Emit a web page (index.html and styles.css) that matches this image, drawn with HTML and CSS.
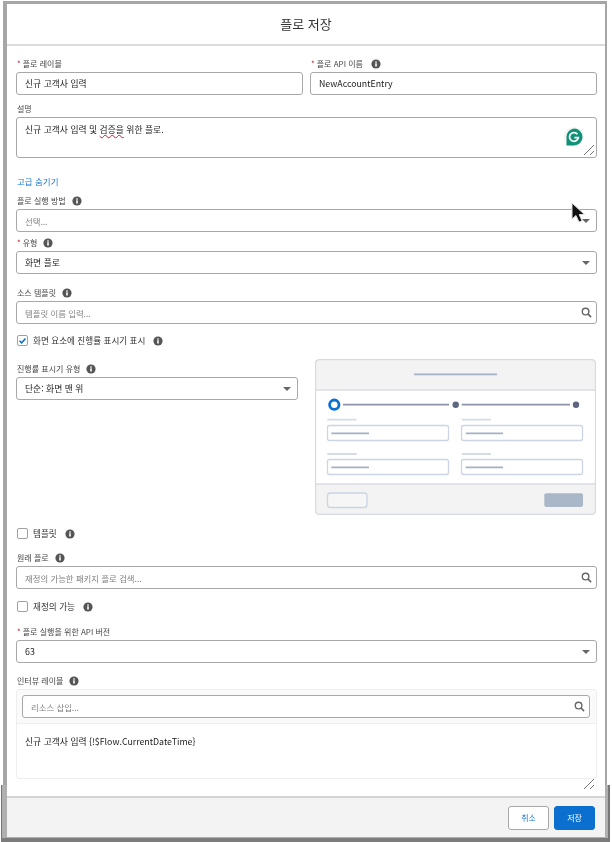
FILE: index.html
```html
<!DOCTYPE html>
<html lang="ko">
<head>
    <meta charset="UTF-8">
    <title>플로 저장</title>
    <link rel="stylesheet" href="styles.css">
</head>
<body>
    <svg class="defs" width="0" height="0">
        <symbol id="info" viewBox="0 0 10 10">
            <circle cx="5" cy="5" r="4.6" fill="#555"/>
            <rect x="4.2" y="4.3" width="1.6" height="3.2" fill="#fff"/>
            <rect x="4.2" y="2.4" width="1.6" height="1.3" fill="#fff"/>
        </symbol>
        <symbol id="search" viewBox="0 0 12 12">
            <circle cx="5" cy="5" r="3.6" fill="none" stroke="#666" stroke-width="1.5"/>
            <path d="M7.8 7.8 11 11" stroke="#666" stroke-width="1.7"/>
        </symbol>
        <symbol id="grip" viewBox="0 0 12 12">
            <path d="M1 11 11 1M7 11 11 7" stroke="#777" stroke-width="1"/>
        </symbol>
    </svg>

    <div class="frame">
        <div class="modal">
            <div class="modal-header">플로 저장</div>

            <div class="form">
                <div class="two-col row-first">
                    <div>
                        <div class="label"><span class="req">*</span>플로 레이블</div>
                        <div class="control">신규 고객사 입력</div>
                    </div>
                    <div>
                        <div class="label"><span class="req">*</span>플로 API 이름<svg class="info info-api"><use href="#info"/></svg></div>
                        <div class="control">NewAccountEntry</div>
                    </div>
                </div>

                <div class="field gap-8">
                    <div class="label">설명</div>
                    <div class="control textarea">
                        <span>신규 고객사 입력 및 <span class="misspelled">검증을</span> 위한 플로.</span>
                        <span class="grammarly">
                            <svg width="18" height="18" viewBox="0 0 18 18">
                                <path d="M9 .5A8.500 8.500 0 1 1 9 17.500H1.500V9A8.500 8.500 0 0 1 9 .5Z" fill="#0f9277"/>
                                <path d="M12.400 6.200A4.400 4.400 0 1 0 13.300 9.700H9.400" fill="none" stroke="#fff" stroke-width="1.700"/>
                            </svg>
                        </span>
                        <svg class="grip"><use href="#grip"/></svg>
                    </div>
                </div>

                <div class="link">고급 숨기기</div>

                <div class="field gap-8">
                    <div class="label">플로 실행 방법<svg class="info"><use href="#info"/></svg></div>
                    <div class="control select placeholder">선택...</div>
                </div>

                <div class="field gap-5">
                    <div class="label"><span class="req">*</span>유형<svg class="info"><use href="#info"/></svg></div>
                    <div class="control select">화면 플로</div>
                </div>

                <div class="field gap-13">
                    <div class="label">소스 템플릿<svg class="info"><use href="#info"/></svg></div>
                    <div class="control placeholder with-search">템플릿 이름 입력...<svg class="search"><use href="#search"/></svg></div>
                </div>

                <div class="check-row gap-10">
                    <span class="checkbox">
                        <svg width="9" height="9" viewBox="0 0 9 9"><path d="M1.5 4.8 3.6 6.8 7.5 2.4" fill="none" stroke="#0b6fd0" stroke-width="1.5"/></svg>
                    </span>
                    화면 요소에 진행률 표시기 표시<svg class="info info-far"><use href="#info"/></svg>
                </div>

                <div class="progress-row">
                    <div class="progress-left">
                        <div class="label">진행률 표시기 유형<svg class="info"><use href="#info"/></svg></div>
                        <div class="control select">단순: 화면 맨 위</div>
                    </div>
                    <svg class="preview" width="281" height="156" viewBox="0 0 281 156">
                        <rect x=".5" y=".5" width="280" height="155" rx="4" fill="#fff" stroke="#dadde3"/>
                        <path d="M1 31V5a4 4 0 0 1 4-4h271a4 4 0 0 1 4 4v26z" fill="#f3f3f3"/>
                        <path d="M1 125v26a4 4 0 0 0 4 4h271a4 4 0 0 0 4-4v-26z" fill="#f3f3f3"/>
                        <path d="M1 31H280M1 125H280" stroke="#dadde3" stroke-width="1.3"/>
                        <rect x=".5" y=".5" width="280" height="155" rx="4" fill="none" stroke="#d6dae1" stroke-width="1.3"/>
                        <path d="M99 15.3H182" stroke="#a3b2c6" stroke-width="1.8"/>
                        <circle cx="19.3" cy="45.7" r="4.7" fill="#fff" stroke="#0b6fd0" stroke-width="2.8"/>
                        <path d="M28 45.7H134M146.700 45.700H255" stroke="#8e94a8" stroke-width="1.800"/>
                        <circle cx="140.700" cy="45.700" r="3.200" fill="#5f6780"/>
                        <circle cx="261" cy="45.700" r="3.200" fill="#5f6780"/>
                        <path d="M12.300 60.700H41.700M146.700 60.700H176M12.300 95H41.700M146.700 95H176" stroke="#d5dce8" stroke-width="1.800"/>
                        <g fill="#fff" stroke="#ccd5e3" stroke-width="1.300">
                            <rect x="12.500" y="66.500" width="121" height="15" rx="2"/>
                            <rect x="146.500" y="66.500" width="121" height="15" rx="2"/>
                            <rect x="12.500" y="100.500" width="121" height="15" rx="2"/>
                            <rect x="146.500" y="100.500" width="121" height="15" rx="2"/>
                        </g>
                        <path d="M16.300 74.300H54M150.700 74.300H188M16.300 108.300H54M150.700 108.300H188" stroke="#a3b2c6" stroke-width="1.800"/>
                        <rect x="12.500" y="134" width="39.500" height="14.500" rx="3" fill="#f6f6f6" stroke="#ccd5e3" stroke-width="1.300"/>
                        <rect x="229.300" y="134.300" width="38.700" height="13.700" rx="2" fill="#a9b7c9"/>
                    </svg>
                </div>

                <div class="check-row gap-12">
                    <span class="checkbox"></span>템플릿<svg class="info info-far"><use href="#info"/></svg>
                </div>

                <div class="field gap-13">
                    <div class="label">원래 플로<svg class="info"><use href="#info"/></svg></div>
                    <div class="control placeholder with-search">재정의 가능한 패키지 플로 검색...<svg class="search"><use href="#search"/></svg></div>
                </div>

                <div class="check-row gap-11">
                    <span class="checkbox"></span>재정의 가능<svg class="info info-far"><use href="#info"/></svg>
                </div>

                <div class="field gap-14">
                    <div class="label"><span class="req">*</span>플로 실행을 위한 API 버전</div>
                    <div class="control select">63</div>
                </div>

                <div class="field gap-12">
                    <div class="label">인터뷰 레이블<svg class="info"><use href="#info"/></svg></div>
                    <div class="editor">
                        <div class="editor-toolbar">
                            <div class="control placeholder with-search">리소스 삽입...<svg class="search"><use href="#search"/></svg></div>
                        </div>
                        <div class="editor-body">
                            신규 고객사 입력 {!$Flow.CurrentDateTime}
                            <svg class="grip"><use href="#grip"/></svg>
                        </div>
                    </div>
                </div>
            </div>

            <div class="modal-footer">
                <button class="btn">취소</button>
                <button class="btn btn-brand">저장</button>
            </div>
        </div>
    </div>

    <svg class="cursor" width="18" height="24" viewBox="0 0 18 24">
        <path d="M2 1 2 17 6 13.500 9 20 12 18.800 9.200 12.500 14.500 12.500Z" fill="#111" stroke="#ddd" stroke-width="1"/>
    </svg>
</body>
</html>
```

FILE: styles.css
```css
body {
    margin: 0;
    background: #fff;
    font-family: "Noto Sans CJK KR", "Liberation Sans", sans-serif;
    font-size: 8px;
    line-height: 12px;
    color: #333;
}
.defs {
    position: absolute;
}
.frame {
    position: relative;
    margin: 1px 5px 0 3px;
    background: #a6a6a6;
    padding: 3px 2px 0 4px;
    height: 841px;
    box-sizing: border-box;
    filter: blur(0.5px);
}
/* second screenshot edge showing behind the bottom of the dialog */
.frame::after {
    content: "";
    position: absolute;
    left: -2px;
    right: -3px;
    top: 784px;
    bottom: 0;
    box-sizing: border-box;
    background: #b0b0b0;
    border-left: 1px solid #777;
    border-right: 2px solid #777;
    border-bottom: 4px solid #7c7c7c;
}
.modal {
    position: relative;
    z-index: 1;
    background: #fff;
    height: 833px;
    display: flex;
    flex-direction: column;
}
.modal-header {
    height: 40px;
    border-bottom: 2px solid #dcdcdc;
    display: flex;
    align-items: center;
    justify-content: center;
    font-size: 13px;
    color: #333;
}
.form {
    flex: 1;
    padding: 0 8px 0 9px;
}
.two-col {
    display: grid;
    grid-template-columns: 287px 287px;
    gap: 7px;
}
.row-first {
    padding-top: 12px;
}
.gap-5 { margin-top: 5px; }
.gap-8 { margin-top: 8px; }
.gap-10 { margin-top: 10px; }
.gap-11 { margin-top: 11px; }
.gap-12 { margin-top: 12px; }
.gap-13 { margin-top: 13px; }
.gap-14 { margin-top: 14px; }

.label {
    display: flex;
    align-items: center;
    height: 12px;
    margin-bottom: 2px;
    padding-left: 1px;
    color: #444;
}
.req {
    color: #d0202e;
    margin-right: 2px;
}
.info {
    width: 10px;
    height: 10px;
    margin-left: 6px;
}
.info-api {
    margin-left: 8px;
}
.info-far {
    margin-left: 8px;
    margin-top: 2px;
}
.control {
    position: relative;
    height: 23px;
    box-sizing: border-box;
    border: 1px solid #a8a8a8;
    border-radius: 3px;
    background: #fff;
    padding: 0 8px;
    display: flex;
    align-items: center;
    font-size: 8.8px;
    color: #222;
}
.placeholder {
    color: #808080;
    font-size: 8.4px;
}
.textarea {
    height: 41px;
    align-items: flex-start;
    padding-top: 6px;
}
.misspelled {
    text-decoration: underline wavy #d0202e 0.5px;
}
.grammarly {
    position: absolute;
    right: 12px;
    top: 9px;
    width: 20px;
    height: 20px;
    background: #f4f4f4;
    border-radius: 50%;
    display: flex;
    align-items: center;
    justify-content: center;
}
.grip {
    position: absolute;
    right: 1px;
    bottom: 1px;
    width: 12px;
    height: 12px;
}
.select::after {
    content: "";
    position: absolute;
    right: 6px;
    top: 9px;
    border-left: 4px solid transparent;
    border-right: 4px solid transparent;
    border-top: 4px solid #666;
}
.search {
    position: absolute;
    right: 4px;
    top: 5px;
    width: 11px;
    height: 11px;
}
.link {
    margin-top: 17px;
    padding-left: 1px;
    font-size: 8.5px;
    color: #1b7ad2;
}
.check-row {
    display: flex;
    align-items: center;
    height: 12px;
    padding-left: 1px;
    font-size: 8.6px;
    color: #333;
}
.checkbox {
    width: 11px;
    height: 11px;
    box-sizing: border-box;
    border: 1px solid #a0a0a0;
    border-radius: 2px;
    background: #fff;
    margin-right: 5px;
    display: flex;
    align-items: center;
    justify-content: center;
}
.progress-row {
    margin-top: 13px;
    display: flex;
    gap: 17px;
    height: 156px;
}
.progress-left {
    width: 282px;
    padding-top: 4px;
}
.editor {
    height: 90px;
    box-sizing: border-box;
    border: 1px solid #eee;
    border-radius: 3px;
}
.editor-toolbar {
    background: #fafafa;
    border-bottom: 1px solid #eee;
    padding: 5px 6px 5px 5px;
}
.editor-body {
    position: relative;
    height: 55px;
    padding: 12px 8px 0;
    font-size: 8.8px;
    color: #222;
}
.modal-footer {
    height: 41px;
    box-sizing: border-box;
    border-top: 2px solid #d4d4d4;
    background: #f3f3f3;
    display: flex;
    justify-content: flex-end;
    align-items: center;
    gap: 5px;
    padding: 0 10px 0 0;
}
.btn {
    width: 41px;
    height: 24px;
    border: 1px solid #a8a8a8;
    border-radius: 3px;
    background: #fff;
    color: #1b7ad2;
    font: inherit;
    padding: 0;
}
.btn-brand {
    background: #0b6fd0;
    border-color: #0b6fd0;
    color: #fff;
}
.cursor {
    position: absolute;
    left: 570px;
    top: 202px;
    z-index: 5;
}
```
